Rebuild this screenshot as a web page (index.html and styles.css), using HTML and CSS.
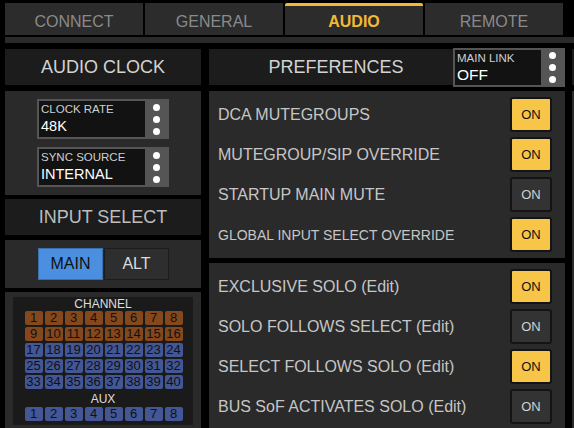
FILE: index.html
```html
<!DOCTYPE html>
<html lang="en">
<head>
  <meta charset="UTF-8" />
  <meta name="viewport" content="width=device-width, initial-scale=1.0" />
  <title>Audio Setup</title>
  <link rel="stylesheet" href="styles.css">
</head>
<body>
  <nav class="tabs">
    <a class="tab">CONNECT</a>
    <a class="tab">GENERAL</a>
    <a class="tab active">AUDIO</a>
    <a class="tab">REMOTE</a>
  </nav>
  <div class="strip"></div>

  <div class="main">
    <div class="col-left">
      <div class="head">AUDIO CLOCK</div>
      <div class="panel clock">
        <div class="picker">
          <div class="picker-text">
            <span class="picker-label">CLOCK RATE</span>
            <span class="picker-value">48K</span>
          </div>
          <div class="dots"><i></i><i></i><i></i></div>
        </div>
        <div class="picker">
          <div class="picker-text">
            <span class="picker-label">SYNC SOURCE</span>
            <span class="picker-value">INTERNAL</span>
          </div>
          <div class="dots"><i></i><i></i><i></i></div>
        </div>
      </div>

      <div class="head head-input">INPUT SELECT</div>
      <div class="panel select">
        <button class="seg seg-on">MAIN</button>
        <button class="seg">ALT</button>
      </div>

      <div class="panel channels">
        <div class="chan-box">
          <div class="chan-title">CHANNEL</div>
          <div class="chan-grid" id="chanGrid"></div>
          <div class="chan-title aux-title">AUX</div>
          <div class="chan-grid" id="auxGrid"></div>
        </div>
      </div>
    </div>

    <div class="col-right">
      <div class="head head-pref">
        <span class="pref-title">PREFERENCES</span>
        <div class="picker picker-link">
          <div class="picker-text">
            <span class="picker-label">MAIN LINK</span>
            <span class="picker-value">OFF</span>
          </div>
          <div class="dots"><i></i><i></i><i></i></div>
        </div>
      </div>

      <div class="panel rows">
        <div class="row"><span>DCA MUTEGROUPS</span><button class="on-btn lit">ON</button></div>
        <div class="row"><span>MUTEGROUP/SIP OVERRIDE</span><button class="on-btn lit">ON</button></div>
        <div class="row"><span>STARTUP MAIN MUTE</span><button class="on-btn">ON</button></div>
        <div class="row"><span class="small">GLOBAL INPUT SELECT OVERRIDE</span><button class="on-btn lit">ON</button></div>
      </div>

      <div class="panel rows rows-solo">
        <div class="row"><span>EXCLUSIVE SOLO (Edit)</span><button class="on-btn lit">ON</button></div>
        <div class="row"><span>SOLO FOLLOWS SELECT (Edit)</span><button class="on-btn">ON</button></div>
        <div class="row"><span>SELECT FOLLOWS SOLO (Edit)</span><button class="on-btn lit">ON</button></div>
        <div class="row"><span>BUS SoF ACTIVATES SOLO (Edit)</span><button class="on-btn">ON</button></div>
      </div>
    </div>

    <div class="col-edge">
      <div class="head"></div>
      <div class="panel edge-panel"></div>
    </div>
  </div>

  <script>
    function fillGrid(id, count, orangeUpTo) {
      const grid = document.getElementById(id);
      for (let i = 1; i <= count; i++) {
        const cell = document.createElement('span');
        cell.className = 'ch' + (i <= orangeUpTo ? ' ch-orange' : '');
        cell.textContent = i;
        grid.appendChild(cell);
      }
    }

    fillGrid('chanGrid', 40, 16);
    fillGrid('auxGrid', 8, 0);
  </script>
</body>
</html>
```

FILE: styles.css
```css
:root {
  --panel: #2a2a2a;
  --head: #1c1c1c;
  --yellow: #f7c548;
  --tab-yellow: #f2b935;
  --blue: #4b8fe0;
}

body {
  margin: 0;
  background: #000;
  font-family: 'Liberation Sans', Arial, sans-serif;
  overflow: hidden;
  height: 428px;
}

/* top tabs */
.tabs {
  display: flex;
  gap: 2px;
  padding: 3px 0 0 5px;
}

.tab {
  width: 138px;
  height: 32px;
  box-sizing: border-box;
  padding-top: 5px;
  background: #2c2c2c;
  color: #8a8a8a;
  font-size: 16px;
  display: flex;
  align-items: center;
  justify-content: center;
}

.tab.active {
  border-top: 3px solid var(--tab-yellow);
  border-radius: 2px 2px 0 0;
  color: var(--tab-yellow);
  font-weight: bold;
  padding-top: 2px;
}

.strip {
  margin: 2px 0 0 5px;
  height: 6px;
  background: var(--panel);
}

.main {
  display: flex;
  gap: 8px;
  margin-top: 6px;
  padding-left: 5px;
}

.head {
  height: 36px;
  background: var(--head);
  color: #d3d3d3;
  font-size: 18px;
  display: flex;
  align-items: center;
  justify-content: center;
}

.panel {
  background: var(--panel);
}

/* left column */
.col-left {
  width: 196px;
  display: flex;
  flex-direction: column;
}

.clock {
  margin-top: 6px;
  height: 104px;
  display: flex;
  flex-direction: column;
  align-items: center;
  gap: 8px;
  padding-top: 8px;
  box-sizing: border-box;
}

.picker {
  width: 132px;
  height: 40px;
  box-sizing: border-box;
  border: 2px solid #555;
  background: #555;
  display: flex;
}

.picker-text {
  flex: 1;
  background: #121212;
  display: flex;
  flex-direction: column;
  padding: 1px 0 0 2px;
}

.picker-label {
  font-size: 11.5px;
  color: #cfcfcf;
  line-height: 15px;
}

.picker-value {
  font-size: 14.5px;
  color: #fff;
  line-height: 18px;
}

.dots {
  width: 22px;
  display: flex;
  flex-direction: column;
  align-items: center;
  justify-content: center;
  gap: 5px;
}

.dots i {
  width: 7px;
  height: 7px;
  border-radius: 50%;
  background: #fff;
}

.head-input {
  margin-top: 4px;
  color: #bdbdbd;
}

.select {
  margin-top: 5px;
  height: 48px;
  display: flex;
  align-items: center;
  justify-content: center;
  gap: 1px;
  padding-left: 1px;
  box-sizing: border-box;
}

.seg {
  width: 65px;
  height: 32px;
  border: 1px solid #1c1c1c;
  background: #2e2e2e;
  color: #dcdcdc;
  font-family: inherit;
  font-size: 16px;
  padding: 0;
}

.seg-on {
  background: var(--blue);
  border-color: #3a6fb0;
  color: #111;
}

.channels {
  margin-top: 4px;
  height: 140px;
  padding: 5px 8px 0;
}

.chan-box {
  background: #1a1a1a;
  height: 128px;
  display: flex;
  flex-direction: column;
  align-items: center;
}

.chan-title {
  font-size: 12px;
  line-height: 14px;
  color: #dedede;
}

.aux-title {
  margin-top: 2px;
  line-height: 16px;
}

.chan-grid {
  display: grid;
  grid-template-columns: repeat(8, 18px);
  grid-auto-rows: 14px;
  gap: 2px;
  margin-left: 1px;
}

.ch {
  background: #435695;
  border-radius: 2px;
  color: #111;
  font-size: 13px;
  line-height: 14px;
  text-align: center;
}

.ch-orange {
  background: #85481c;
}

/* right column */
.col-right {
  width: 356px;
  display: flex;
  flex-direction: column;
}

.head-pref {
  justify-content: space-between;
}

.pref-title {
  flex: 1;
  text-align: center;
  padding-left: 10px;
}

.picker-link {
  width: 112px;
  height: 39px;
  margin: -1px 0 -2px;
  align-self: flex-start;
}

.picker-link .picker-value {
  font-size: 15.5px;
}

.rows {
  margin-top: 6px;
  padding: 6px 13px 6px 9px;
  display: flex;
  flex-direction: column;
  gap: 5px;
}

.rows-solo {
  margin-top: 5px;
  flex: 1;
}

.row {
  height: 35px;
  display: flex;
  align-items: center;
  justify-content: space-between;
  color: #c6c6c6;
  font-size: 16px;
}

.row .small {
  font-size: 14px;
}

.on-btn {
  width: 42px;
  height: 35px;
  border: 2px solid #141414;
  border-radius: 3px;
  background: #333;
  color: #d0d0d0;
  font-family: inherit;
  font-size: 13px;
  padding: 0;
}

.on-btn.lit {
  background: var(--yellow);
  color: #111;
}

.col-edge {
  flex: 1;
  margin-left: -1px;
  display: flex;
  flex-direction: column;
}

.edge-panel {
  margin-top: 6px;
  flex: 1;
}
```
